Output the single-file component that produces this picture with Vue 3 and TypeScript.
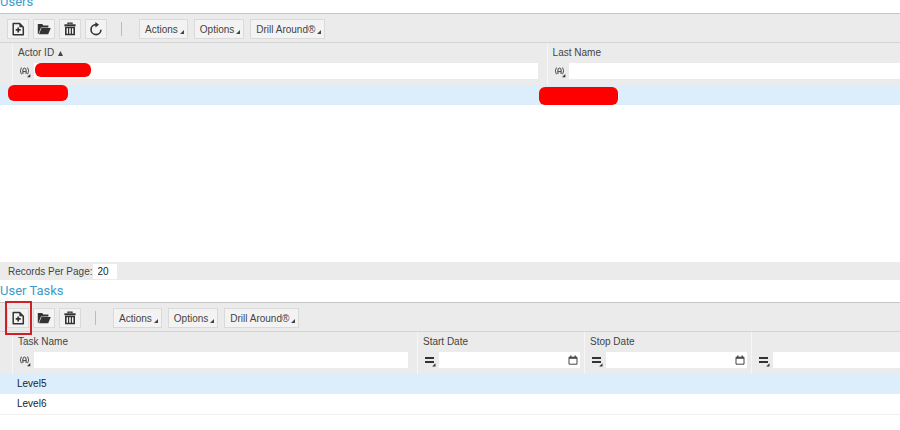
<script setup lang="ts">
import { ref } from 'vue'

type IconName = 'new' | 'open' | 'delete' | 'refresh'
interface Column {
  key: string
  label: string
  kind: 'text' | 'date'
  picker?: boolean
  sorted?: boolean
  masked?: boolean
}
interface Grid {
  id: string
  title: string
  tools: IconName[]
  highlighted?: IconName
  columns: Column[]
  rows: Record<string, string>[]
  paged?: boolean
}

const toolLabels: Record<IconName, string> = {
  new: 'New',
  open: 'Open',
  delete: 'Delete',
  refresh: 'Refresh',
}
const menus = ['Actions', 'Options', 'Drill Around®']
const pageSize = ref('20')

const grids: Grid[] = [
  {
    id: 'users',
    title: 'Users',
    tools: ['new', 'open', 'delete', 'refresh'],
    columns: [
      { key: 'actor', label: 'Actor ID', kind: 'text', sorted: true, masked: true },
      { key: 'last', label: 'Last Name', kind: 'text' },
    ],
    rows: [{ actor: '', last: '' }],
    paged: true,
  },
  {
    id: 'tasks',
    title: 'User Tasks',
    tools: ['new', 'open', 'delete'],
    highlighted: 'new',
    columns: [
      { key: 'name', label: 'Task Name', kind: 'text' },
      { key: 'start', label: 'Start Date', kind: 'date', picker: true },
      { key: 'stop', label: 'Stop Date', kind: 'date', picker: true },
      { key: 'other', label: '', kind: 'date' },
    ],
    rows: [{ name: 'Level5' }, { name: 'Level6' }],
  },
]
</script>

<template>
  <main class="page">
    <section v-for="grid in grids" :key="grid.id" class="panel" :class="grid.id">
      <h2 class="title">{{ grid.title }}</h2>

      <div class="toolbar">
        <div class="tools">
          <button
            v-for="tool in grid.tools"
            :key="tool"
            type="button"
            class="tool"
            :class="{ highlighted: grid.highlighted === tool }"
            :aria-label="toolLabels[tool]"
          >
            <svg v-if="tool === 'new'" class="icon" viewBox="0 0 14 14">
              <path d="M2.2 1.4h6.2l3.9 3.9v7.4H2.2z" fill="none" stroke="#333" stroke-width="1.5" stroke-linejoin="round" />
              <path d="M8.4 1.4v3.9h3.9z" fill="#333" />
              <path d="M7.2 5.4v5M4.7 7.9h5" stroke="#333" stroke-width="1.7" />
            </svg>
            <svg v-else-if="tool === 'open'" class="icon" viewBox="0 0 14 14">
              <path d="M.8 12V2h4.4l1.2 1.5h5v1.9H4L1.4 12z" fill="#333" />
              <path d="M4.5 6.1h9.3L11.2 12.2H1.9z" fill="#333" />
            </svg>
            <svg v-else-if="tool === 'delete'" class="icon" viewBox="0 0 14 14">
              <path d="M5 2.3V1.1h4v1.2" fill="none" stroke="#333" stroke-width="1.3" />
              <path d="M1.4 3.3h11.2" stroke="#333" stroke-width="2" />
              <path d="M2.8 5.5h8.4v7H2.8z" fill="none" stroke="#333" stroke-width="1.6" />
              <path d="M5.6 6v6M8.4 6v6" stroke="#333" stroke-width="1.2" />
            </svg>
            <svg v-else class="icon" viewBox="0 0 14 14">
              <path d="M7 2.6a5 5 0 1 0 5 5.2" fill="none" stroke="#333" stroke-width="1.6" />
              <path d="M6.4 0 10 2.7 6.4 5.4z" fill="#333" />
            </svg>
          </button>
        </div>
        <span class="divider"></span>
        <div class="menus">
          <button v-for="menu in menus" :key="menu" type="button" class="menu">
            {{ menu }}
            <svg class="corner" viewBox="0 0 4 4"><path d="M4 0v4H0z" fill="#444" /></svg>
          </button>
        </div>
      </div>

      <div class="content">
        <table>
          <colgroup>
            <col class="gutter" />
            <col v-for="column in grid.columns" :key="column.key" :class="column.key" />
          </colgroup>
          <thead>
            <tr>
              <td></td>
              <th v-for="column in grid.columns" :key="column.key" scope="col">
                <label class="heading" :for="grid.id + '-' + column.key">
                  {{ column.label }}
                  <svg v-if="column.sorted" class="sort" viewBox="0 0 5 5"><path d="M2.5 0 5 5H0z" fill="#444" /></svg>
                </label>
                <div class="filter">
                  <button type="button" class="operator" aria-label="Filter type">
                    <svg v-if="column.kind === 'text'" class="glyph" viewBox="0 0 13 12">
                      <path d="M2.4 1.5Q.4 4.9 2.4 8.3M8.6 1.5q2 3.4 0 6.8" fill="none" stroke="#555" stroke-width="1" />
                      <path d="M3.9 8V4Q3.9 2.1 5.5 2.1T7.1 4v4M3.9 5.6h3.2" fill="none" stroke="#444" stroke-width="1" />
                      <path d="M11.3 8v3.3H8z" fill="#333" />
                    </svg>
                    <svg v-else class="glyph" viewBox="0 0 13 12">
                      <path d="M1 3h9M1 7h9" stroke="#333" stroke-width="2.2" />
                      <path d="M11.5 8.2v3.3H8.2z" fill="#333" />
                    </svg>
                  </button>
                  <div class="field">
                    <input :id="grid.id + '-' + column.key" type="text" />
                    <button v-if="column.picker" type="button" class="picker" aria-label="Choose date">
                      <svg viewBox="0 0 10 10">
                        <path d="M1 2.2h8v7H1z" fill="#fff" stroke="#444" stroke-width="1" />
                        <path d="M1 3h8" stroke="#444" stroke-width="1.6" />
                        <path d="M2.8.5v2M7.2.5v2" stroke="#444" stroke-width="1.3" />
                      </svg>
                    </button>
                    <span v-if="column.masked" class="mask in-field"></span>
                  </div>
                </div>
              </th>
            </tr>
          </thead>
          <tbody>
            <tr v-for="(row, index) in grid.rows" :key="index" :class="{ selected: index === 0 }">
              <td></td>
              <td v-for="column in grid.columns" :key="column.key">
                {{ row[column.key] }}
                <span v-if="grid.id === 'users'" class="mask" :class="'in-' + column.key"></span>
              </td>
            </tr>
          </tbody>
        </table>
      </div>

      <footer v-if="grid.paged" class="pager">
        <label for="page-size">Records Per Page:</label>
        <input id="page-size" v-model="pageSize" type="text" />
      </footer>
    </section>
  </main>
</template>

<style>
body {
  margin: 0;
  background: #fff;
}
</style>

<style scoped>
.page {
  display: flex;
  flex-direction: column;
  overflow: hidden;
  font-family: "Liberation Sans", Arial, sans-serif;
  font-size: 10px;
  color: #444;
}
.users {
  margin-top: -9px;
}
.users .content {
  min-height: 219px;
}
.title {
  margin: 0;
  height: 22px;
  font-family: Roboto, sans-serif;
  font-size: 13px;
  line-height: 22px;
  font-weight: 400;
  color: #3d9bca;
}
button,
input {
  box-sizing: border-box;
  margin: 0;
  padding: 0;
  border: 0;
  border-radius: 0;
  font: inherit;
  color: inherit;
  background: none;
}
svg {
  display: block;
}
.toolbar {
  display: flex;
  align-items: center;
  padding: 5px 7px 3px;
  border-top: 1px solid #c6c6c6;
  border-bottom: 1px solid #d4d4d4;
  background: #ebebeb;
}
.tools {
  display: flex;
  gap: 4px;
}
.tool,
.menu {
  height: 20px;
  border: 1px solid #dadada;
  background: #f3f3f3;
}
.tool {
  position: relative;
  display: flex;
  align-items: center;
  justify-content: center;
  width: 22px;
}
.icon {
  width: 14px;
  height: 14px;
}
.highlighted::after {
  content: "";
  position: absolute;
  inset: -8px -4px -8px -3px;
  border: 2px solid #cf2027;
}
.divider {
  width: 1px;
  height: 14px;
  margin: 0 17px 0 14px;
  background: #bbb;
}
.menus {
  display: flex;
  gap: 6px;
}
.menu {
  display: flex;
  align-items: center;
  gap: 2px;
  padding: 0 3px 0 5px;
}
.corner {
  width: 4px;
  height: 4px;
  margin-top: 5px;
}
table {
  width: 100%;
  table-layout: fixed;
  border-spacing: 0;
}
.gutter {
  width: 12px;
}
.actor {
  width: 59.4%;
}
.name {
  width: 45%;
}
.start,
.stop {
  width: 167px;
}
td,
th {
  padding: 0;
  text-align: left;
  font-weight: 400;
}
thead {
  background: #ebebeb;
}
th {
  height: 42px;
  box-sizing: border-box;
  padding: 3px 4px 6px 5px;
  border-left: 1px solid #f6f6f6;
  vertical-align: top;
}
.users th:nth-child(2),
.tasks th:nth-child(2) {
  padding-right: 9px;
}
.users th:last-child,
.tasks th:last-child {
  padding-right: 0;
}
.heading {
  display: flex;
  align-items: center;
  gap: 4px;
  height: 14px;
  line-height: 14px;
}
.sort {
  width: 5px;
  height: 5px;
}
.filter {
  display: flex;
  margin-top: 3px;
}
.operator {
  width: 16px;
  height: 16px;
  padding-left: 1px;
}
.glyph {
  width: 13px;
  height: 12px;
  margin-top: 2px;
}
.field {
  position: relative;
  display: flex;
  flex: 1;
  min-width: 0;
  align-items: center;
  background: #fff;
}
.field input {
  flex: 1;
  min-width: 0;
  height: 16px;
  padding: 0 3px;
}
.picker {
  width: 12px;
}
.picker svg {
  width: 10px;
  height: 10px;
}
tbody td {
  position: relative;
  height: 20px;
  color: #222;
  line-height: 20px;
  border-bottom: 1px solid #f0f0f0;
}
tbody td + td {
  padding-left: 5px;
}
.selected td {
  border-bottom: 0;
  background: #dceefb;
}
.mask {
  position: absolute;
  border-radius: 6px;
  background: #f00;
}
.in-field {
  left: 1px;
  top: 0;
  width: 56px;
  height: 14px;
}
.in-actor {
  left: -4px;
  top: 0;
  width: 60px;
  height: 16px;
}
.in-last {
  left: -8px;
  top: 2px;
  width: 79px;
  height: 18px;
}
.pager {
  display: flex;
  align-items: center;
  height: 18px;
  padding-left: 8px;
  background: #ebebeb;
}
.pager input {
  width: 24px;
  height: 15px;
  padding: 0 5px;
  background: #fff;
  color: #222;
}
</style>
